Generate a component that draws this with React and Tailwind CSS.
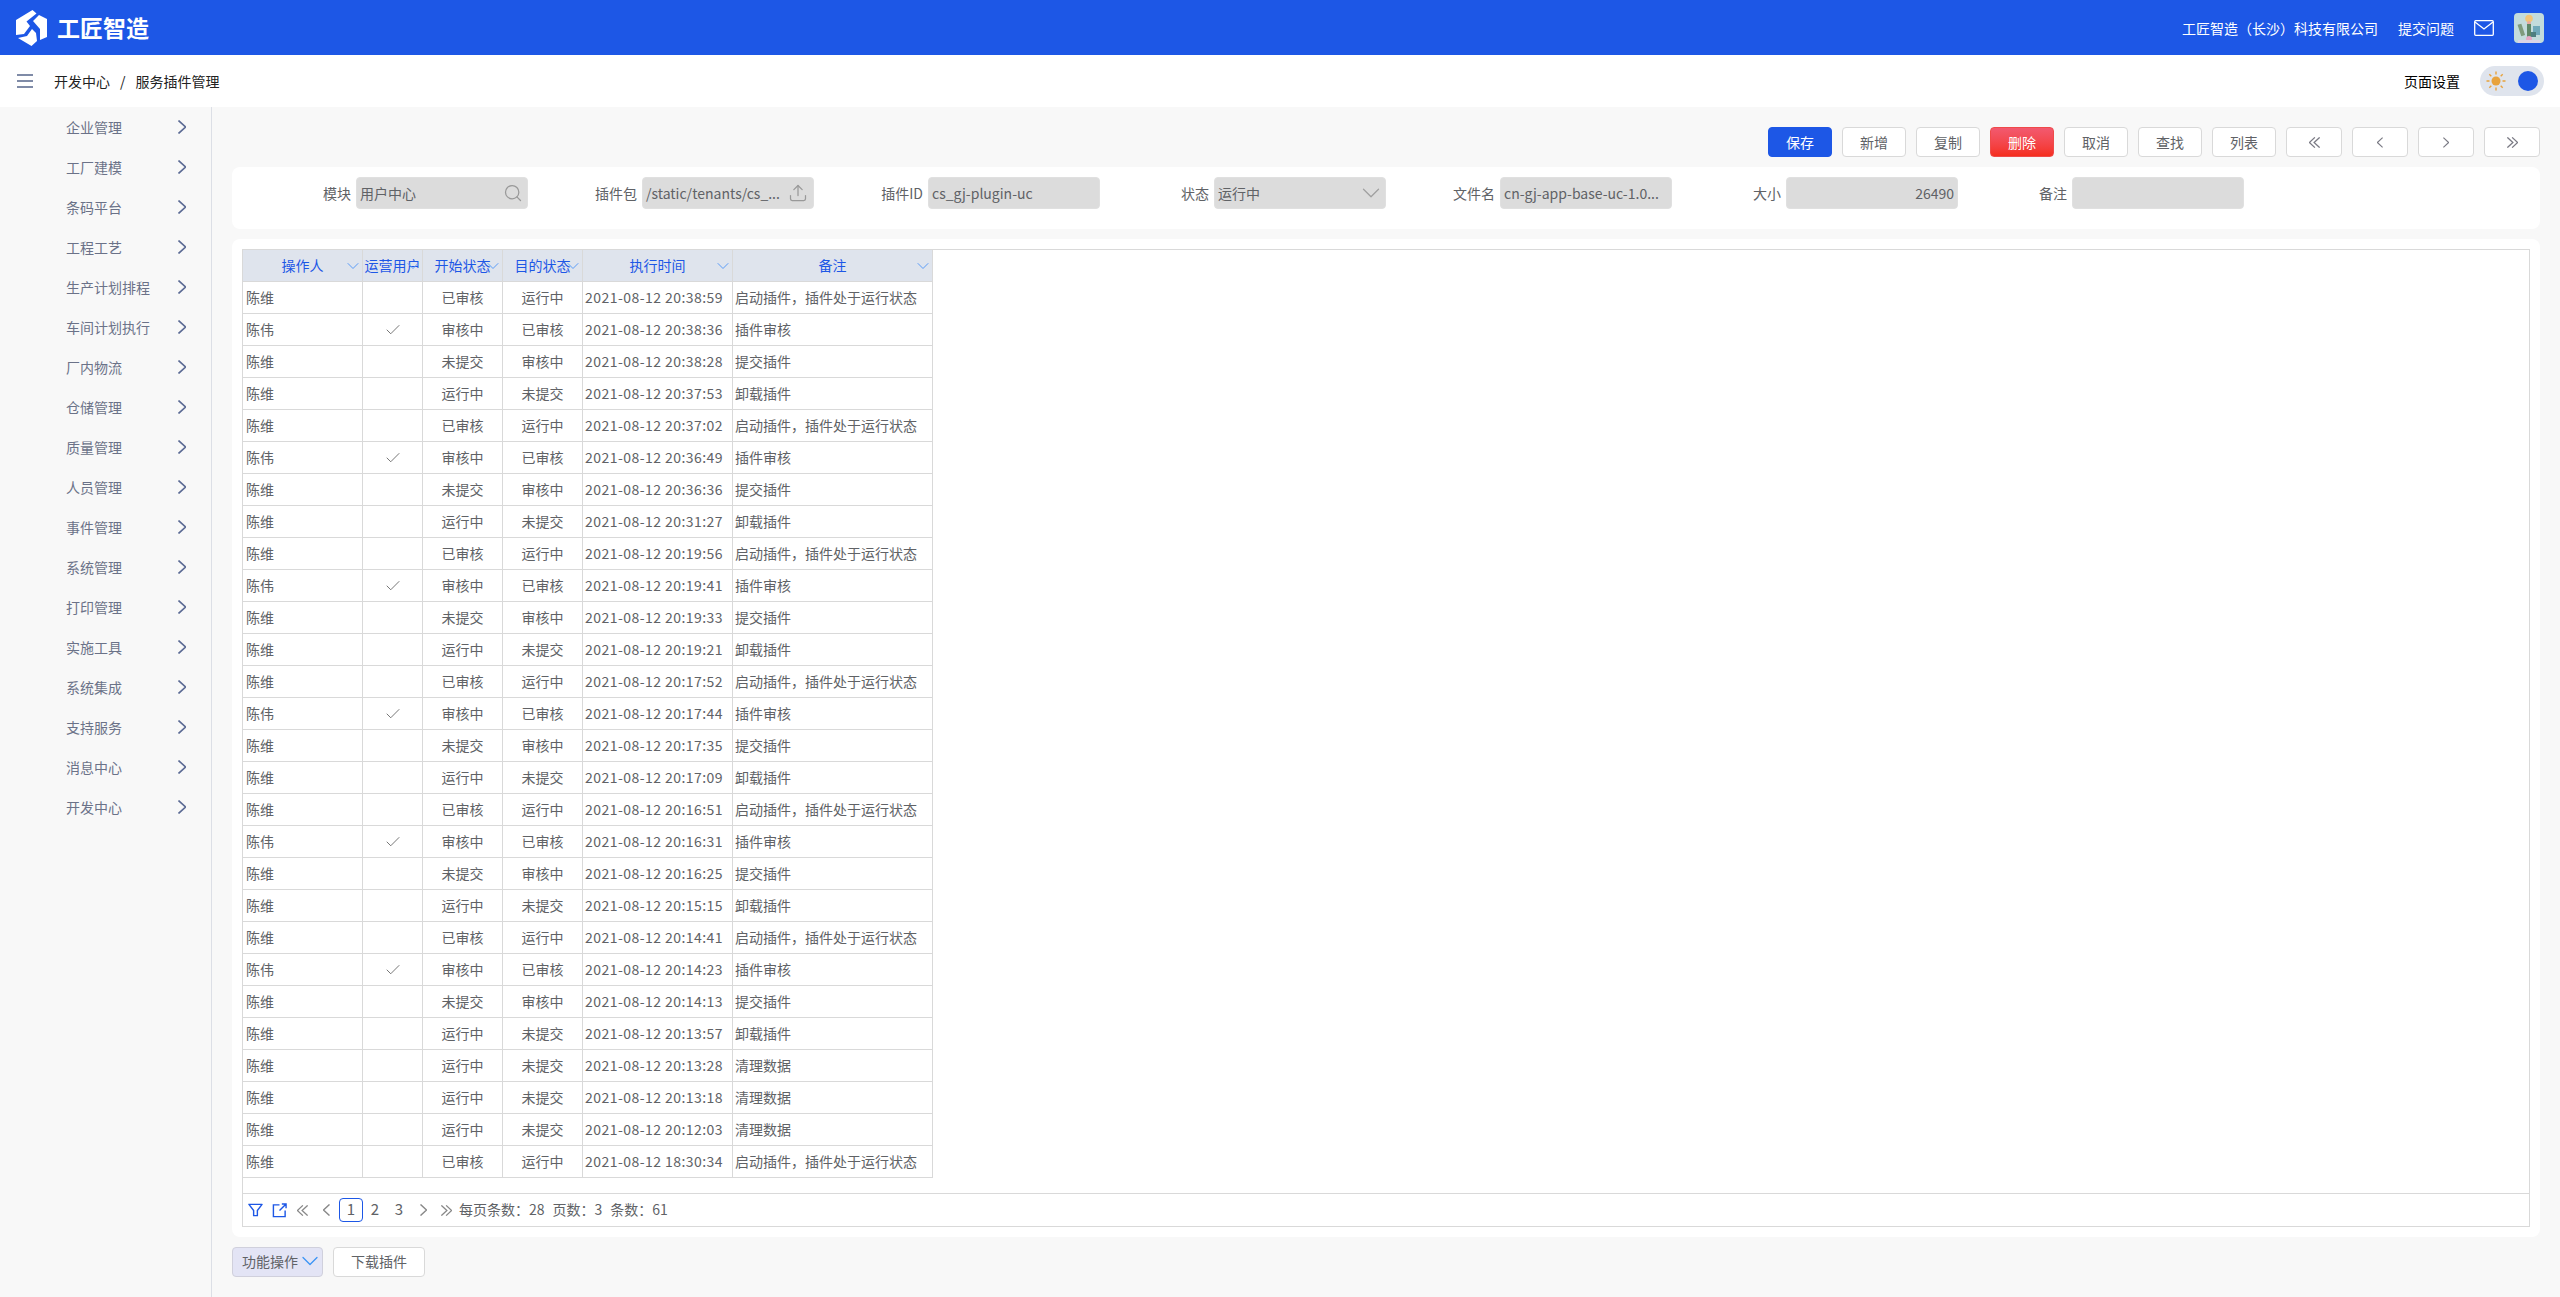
import { Search, Upload, ChevronDown, Check } from 'lucide-react';

const menus = ['企业管理', '工厂建模', '条码平台', '工程工艺', '生产计划排程', '车间计划执行', '厂内物流', '仓储管理', '质量管理', '人员管理', '事件管理', '系统管理', '打印管理', '实施工具', '系统集成', '支持服务', '消息中心', '开发中心'];

const columns = [
  { title: '操作人', width: 'w-[120px]' },
  { title: '运营用户', width: 'w-[60px]' },
  { title: '开始状态', width: 'w-[80px]' },
  { title: '目的状态', width: 'w-[80px]' },
  { title: '执行时间', width: 'w-[150px]' },
  { title: '备注', width: 'w-[200px]' },
];

const START = ['已审核', '运行中', '启动插件，插件处于运行状态'];
const AUDIT = ['审核中', '已审核', '插件审核'];
const SUBMIT = ['未提交', '审核中', '提交插件'];
const UNLOAD = ['运行中', '未提交', '卸载插件'];
const CLEAN = ['运行中', '未提交', '清理数据'];

const rows = [
  [START, '20:38:59'], [AUDIT, '20:38:36'], [SUBMIT, '20:38:28'], [UNLOAD, '20:37:53'],
  [START, '20:37:02'], [AUDIT, '20:36:49'], [SUBMIT, '20:36:36'], [UNLOAD, '20:31:27'],
  [START, '20:19:56'], [AUDIT, '20:19:41'], [SUBMIT, '20:19:33'], [UNLOAD, '20:19:21'],
  [START, '20:17:52'], [AUDIT, '20:17:44'], [SUBMIT, '20:17:35'], [UNLOAD, '20:17:09'],
  [START, '20:16:51'], [AUDIT, '20:16:31'], [SUBMIT, '20:16:25'], [UNLOAD, '20:15:15'],
  [START, '20:14:41'], [AUDIT, '20:14:23'], [SUBMIT, '20:14:13'], [UNLOAD, '20:13:57'],
  [CLEAN, '20:13:28'], [CLEAN, '20:13:18'], [CLEAN, '20:12:03'], [START, '18:30:34'],
];

function Chevron({ dir = 'right', double = false, className = '' }) {
  const first = dir === 'right' ? '0.5,0.5 7.5,7 0.5,13.5' : '7.5,0.5 0.5,7 7.5,13.5';
  const second = dir === 'right' ? '6.5,0.5 13.5,7 6.5,13.5' : '13.5,0.5 6.5,7 13.5,13.5';
  return (
    <svg viewBox={double ? '0 0 14 14' : '0 0 8 14'} className={className} fill="none" stroke="currentColor" strokeWidth="1.6">
      <polyline points={first} />
      {double && <polyline points={second} />}
    </svg>
  );
}

function Logo() {
  return (
    <svg viewBox="0 0 31 36" className="w-[31px] h-[36px] ml-4" fill="#fff">
      <polygon points="0,10 16.500,0 20.500,3.500 10.500,11.500 14,16 8,24 0,25" />
      <polygon points="23,5 31,9 31,27 24,30 24,19 17,11" />
      <polygon points="16,19 20,23 21,31 15.500,36 2,28 11,26" />
    </svg>
  );
}

function Avatar() {
  return (
    <svg viewBox="0 0 30 30" className="w-[30px] h-[30px] rounded ml-5">
      <defs>
        <filter id="soft"><feGaussianBlur stdDeviation="0.7" /></filter>
      </defs>
      <rect width="30" height="30" fill="#c3dcdc" />
      <g filter="url(#soft)">
        <circle cx="15" cy="5.500" r="3.800" fill="#f2c477" />
        <circle cx="15" cy="10" r="2" fill="#e8a9a0" />
        <rect x="5" y="11" width="4" height="12" fill="#7e9b7c" transform="rotate(-18 7 16)" />
        <rect x="13" y="11" width="4" height="13" fill="#5f8868" />
        <rect x="19" y="13" width="7" height="9" fill="#6fa9ba" />
        <rect x="17" y="19" width="5" height="5" fill="#4f7f80" />
        <circle cx="15" cy="26" r="3" fill="#e6a8c4" />
        <rect x="4" y="27" width="22" height="3" fill="#dcd3e6" />
      </g>
    </svg>
  );
}

function ToolButton({ children, variant = 'default', wide = false }) {
  const styles = {
    default: 'bg-white border-[#d9d9d9] text-[#606266]',
    primary: 'bg-[#1d57e6] border-[#1d57e6] text-white',
    danger: 'bg-gradient-to-b from-[#f2596f] to-[#f52e1c] border-[#ef4a4a] text-white',
  };
  return (
    <button className={`${wide ? 'w-[56px]' : 'w-[64px]'} h-[30px] ml-[10px] flex items-center justify-center rounded border text-sm ${styles[variant]}`}>
      {children}
    </button>
  );
}

function Field({ label, children, align = '' }) {
  return (
    <div className="w-[286px] shrink-0 flex items-center">
      <span className="w-[109px] mr-[5px] text-right text-sm text-[#606266]">{label}</span>
      <div className={`w-[172px] h-[32px] px-[3px] flex items-center rounded bg-[#dcdcdc] border border-[#e0e0e0] text-sm text-[#606266] whitespace-nowrap overflow-hidden ${align}`}>
        {children}
      </div>
    </div>
  );
}

export default function App() {
  return (
    <div className="h-screen overflow-hidden flex flex-col bg-[#f8f8f8] font-['Noto_Sans_CJK_SC','Noto_Sans',sans-serif] text-sm text-[#606266]">
      <header className="h-[55px] shrink-0 bg-[#1d57e6] flex items-center text-white">
        <Logo />
        <span className="ml-[10px] text-[23px] font-bold leading-none">工匠智造</span>
        <span className="ml-auto">工匠智造（长沙）科技有限公司</span>
        <span className="ml-5">提交问题</span>
        <svg viewBox="0 0 20 16" className="w-5 h-4 ml-5" fill="none" stroke="#fff" strokeWidth="1.300">
          <rect x="0.700" y="0.700" width="18.600" height="14.600" rx="1" />
          <polyline points="1,2 10,9 19,2" />
        </svg>
        <div className="mr-4"><Avatar /></div>
      </header>

      <div className="h-[52px] shrink-0 bg-white flex items-center text-[#222]">
        <svg viewBox="0 0 16 14" className="w-4 h-[14px] ml-[17px]" fill="none" stroke="#55648a" strokeWidth="1.500">
          <line x1="0" y1="1" x2="16" y2="1" />
          <line x1="0" y1="7" x2="16" y2="7" />
          <line x1="0" y1="13" x2="16" y2="13" />
        </svg>
        <span className="ml-[21px]">开发中心</span>
        <span className="mx-[10px]">/</span>
        <span>服务插件管理</span>
        <span className="ml-auto text-black">页面设置</span>
        <div className="relative w-[64px] h-[30px] ml-5 mr-4 rounded-full bg-[#dfe4ed]">
          <svg viewBox="0 0 20 20" className="absolute left-[6px] top-[5px] w-5 h-5" stroke="#e8a33d" strokeWidth="1.400" fill="#e8a33d">
            <circle cx="10" cy="10" r="4.500" stroke="none" />
            <path d="M10 .5v3M10 16.500v3M.5 10h3M16.500 10h3M3.300 3.300l2 2M14.700 14.700l2 2M3.300 16.700l2-2M14.700 5.300l2-2" fill="none" />
          </svg>
          <span className="absolute right-[6px] top-[5px] w-5 h-5 rounded-full bg-[#1d57e6]" />
        </div>
      </div>

      <div className="flex-1 flex min-h-0">
        <aside className="w-[212px] shrink-0 border-r border-[#dcdfe6]">
          {menus.map((name) => (
            <div key={name} className="h-10 pl-[66px] pr-[25px] flex items-center justify-between text-[#6b7288]">
              <span>{name}</span>
              <Chevron className="w-2 h-[14px] text-[#5b6a94]" />
            </div>
          ))}
        </aside>

        <main className="flex-1 min-w-0 px-5 pt-5">
          <div className="flex justify-end h-[30px] mb-[10px]">
            <ToolButton variant="primary">保存</ToolButton>
            <ToolButton>新增</ToolButton>
            <ToolButton>复制</ToolButton>
            <ToolButton variant="danger">删除</ToolButton>
            <ToolButton>取消</ToolButton>
            <ToolButton>查找</ToolButton>
            <ToolButton>列表</ToolButton>
            <ToolButton wide><Chevron dir="left" double className="w-[11px] h-[11px] text-[#7a7a84]" /></ToolButton>
            <ToolButton wide><Chevron dir="left" className="w-[6px] h-[11px] text-[#7a7a84]" /></ToolButton>
            <ToolButton wide><Chevron className="w-[6px] h-[11px] text-[#7a7a84]" /></ToolButton>
            <ToolButton wide><Chevron double className="w-[11px] h-[11px] text-[#7a7a84]" /></ToolButton>
          </div>

          <section className="h-[62px] mb-[10px] px-[10px] pt-[10px] flex items-start rounded-lg bg-white">
            <Field label="模块">
              <span>用户中心</span>
              <Search className="w-5 h-5 ml-auto mr-[1px] text-[#999]" strokeWidth={1.5} />
            </Field>
            <Field label="插件包">
              <span>/static/tenants/cs_...</span>
              <Upload className="w-5 h-5 ml-auto mr-[2px] text-[#999]" strokeWidth={1.5} />
            </Field>
            <Field label="插件ID">cs_gj-plugin-uc</Field>
            <Field label="状态">
              <span>运行中</span>
              <ChevronDown className="w-[30px] h-[30px] ml-auto -mr-[4px] text-[#a0a0a0]" strokeWidth={1} />
            </Field>
            <Field label="文件名">cn-gj-app-base-uc-1.0...</Field>
            <Field label="大小" align="justify-end">26490</Field>
            <Field label="备注" />
          </section>

          <section className="p-[10px] rounded-lg bg-white">
            <div className="border border-[#d9d9d9]">
              <table className="table-fixed w-[690px] border-separate border-spacing-0">
                <thead>
                  <tr className="h-8">
                    {columns.map((col) => (
                      <th key={col.title} className={`${col.width} relative p-0 pb-[2px] bg-[#dfe4ed] border-r border-b border-[#d9d9d9] text-center font-normal text-[#1d57e6]`}>
                        {col.title}
                        <ChevronDown className="absolute -right-[1px] top-[6px] w-5 h-5 text-[#5a9cf8]" strokeWidth={1.2} />
                      </th>
                    ))}
                  </tr>
                </thead>
                <tbody>
                  {rows.map(([kind, time]) => {
                    const audit = kind === AUDIT;
                    return (
                      <tr key={time} className="h-8">
                        <td className="p-0 pl-[3px] pb-[2px] border-r border-b border-[#d9d9d9]">{audit ? '陈伟' : '陈维'}</td>
                        <td className="p-0 border-r border-b border-[#d9d9d9]">
                          {audit && <Check className="mx-auto w-[18px] h-[18px] text-[#666]" strokeWidth={1.2} />}
                        </td>
                        <td className="p-0 pb-[2px] text-center border-r border-b border-[#d9d9d9]">{kind[0]}</td>
                        <td className="p-0 pb-[2px] text-center border-r border-b border-[#d9d9d9]">{kind[1]}</td>
                        <td className="p-0 pl-[2px] pb-[2px] tracking-[0.45px] whitespace-nowrap border-r border-b border-[#d9d9d9]">2021-08-12 {time}</td>
                        <td className="p-0 pl-[2px] pb-[2px] whitespace-nowrap border-r border-b border-[#d9d9d9]">{kind[2]}</td>
                      </tr>
                    );
                  })}
                </tbody>
              </table>
              <div className="h-[16px] border-b border-[#d9d9d9]" />
              <div className="h-[32px] flex items-center pl-[5px]">
                <svg viewBox="0 0 16 14" className="w-[15px] h-[14px] text-[#1d57e6]" fill="none" stroke="currentColor" strokeWidth="1.500" strokeLinejoin="round">
                  <path d="M1 1h14l-5 6.500V13H6V7.500z" />
                </svg>
                <svg viewBox="0 0 16 16" className="w-[15px] h-[15px] ml-[9px] text-[#1d57e6]" fill="none" stroke="currentColor" strokeWidth="1.500">
                  <path d="M8 2H1.500v12.500H14V8M8 8l7-7M10.500 1H15v4.500" />
                </svg>
                <Chevron dir="left" double className="w-[11px] h-[11px] ml-[10px] text-[#888]" />
                <Chevron dir="left" className="w-[7px] h-[12px] ml-[15px] text-[#888]" />
                <span className="w-6 h-6 ml-[9px] pb-[2px] flex items-center justify-center rounded-sm border border-[#1d57e6] text-[15px]">1</span>
                <span className="w-6 h-6 pb-[2px] flex items-center justify-center text-[15px]">2</span>
                <span className="w-6 h-6 pb-[2px] flex items-center justify-center text-[15px]">3</span>
                <Chevron className="w-[7px] h-[12px] ml-[9px] text-[#888]" />
                <Chevron double className="w-[11px] h-[11px] ml-[14px] text-[#888]" />
                <span className="ml-[7px] -mt-[2px]">每页条数：28</span>
                <span className="ml-[8px] -mt-[2px]">页数：3</span>
                <span className="ml-[8px] -mt-[2px]">条数：61</span>
              </div>
            </div>
          </section>

          <div className="flex mt-[10px]">
            <button className="w-[91px] h-[30px] pl-[9px] pb-[2px] flex items-center rounded border border-[#d0d0dc] bg-[#e3e4f5] whitespace-nowrap">
              功能操作
              <ChevronDown className="w-7 h-7 -ml-[2px] shrink-0 text-[#3b94f5]" strokeWidth={1.1} />
            </button>
            <button className="w-[92px] h-[30px] ml-[10px] pb-[2px] rounded border border-[#d9d9d9] bg-white">下载插件</button>
          </div>
        </main>
      </div>
    </div>
  );
}
